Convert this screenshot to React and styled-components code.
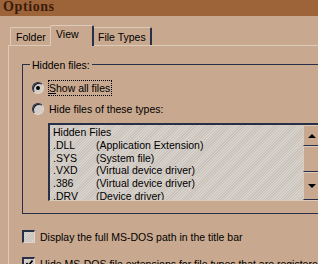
import React from "react";
import styled, { createGlobalStyle } from "styled-components";

const GlobalStyle = createGlobalStyle`
  html, body {
    margin: 0;
    padding: 0;
    width: 318px;
    height: 264px;
    overflow: hidden;
    background: #c8a88e;
  }
  body {
    font-family: "Liberation Sans", Arial, sans-serif;
    font-size: 10.5px;
    color: #000;
  }
`;

const Window = styled.div`
  width: 360px;
  height: 264px;
  display: flex;
  flex-direction: column;
`;

const TitleBar = styled.div`
  height: 16px;
  flex: none;
  background: #9c6438;
  padding-left: 3px;
  font-family: "Liberation Serif", "Times New Roman", serif;
  font-weight: bold;
  font-size: 14px;
  letter-spacing: 0.6px;
  line-height: 12px;
  color: #3c1c0c;
  padding-top: 1px;
  box-sizing: border-box;
`;

const TabStrip = styled.div`
  height: 29px;
  flex: none;
  display: flex;
  align-items: flex-end;
  padding-left: 10px;
`;

const Tab = styled.div`
  box-sizing: border-box;
  position: relative;
  z-index: ${(p) => (p.$active ? 1 : 0)};
  width: ${(p) => p.$width}px;
  height: ${(p) => (p.$active ? 21 : 18)}px;
  margin: 0 ${(p) => (p.$active ? -2 : 0)}px ${(p) => (p.$active ? -1 : 0)}px;
  padding: ${(p) => (p.$active ? 1 : 2)}px 0 0 5px;
  line-height: 14px;
  white-space: nowrap;
  background: #c8a88e;
  border-top: 1px solid #dccbb9;
  border-left: 1px solid #dccbb9;
  border-right: 2px solid #283048;
  border-radius: 2px 2px 0 0;
`;

const Panel = styled.div`
  flex: 1;
  margin-left: 8px;
  border-top: 1px solid #dccbb9;
  border-left: 1px solid #dccbb9;
  padding: 10px 0 0 13px;
`;

const Group = styled.fieldset`
  margin: 0;
  padding: 0 0 12px 0;
  width: 320px;
  min-width: 0;
  border: 1px solid #283048;
`;

const Legend = styled.legend`
  margin-left: 7px;
  padding: 3px 2px 0;
  line-height: 13px;
`;

const Options = styled.div`
  padding-left: 9px;
  display: flex;
  flex-direction: column;
  gap: 5px;
  margin-top: 8px;
`;

const RadioRow = styled.div`
  display: flex;
  align-items: center;
  gap: 4px;
`;

const Radio = styled.span`
  box-sizing: border-box;
  width: 12px;
  height: 12px;
  border-radius: 50%;
  border: 1px solid;
  border-color: #283048 #e2d6ca #e2d6ca #283048;
  background: #d4cec8;
  box-shadow: inset 1px 1px 0 #1a1a24;
  display: flex;
  align-items: center;
  justify-content: center;
  &::after {
    content: "";
    width: 4px;
    height: 4px;
    border-radius: 50%;
    background: ${(p) => (p.$checked ? "#000" : "transparent")};
  }
`;

const Label = styled.span`
  box-sizing: border-box;
  height: 16px;
  line-height: 13px;
  padding: 1px 1px 0 0;
  border: 1px dotted ${(p) => (p.$focused ? "#000" : "transparent")};
  white-space: nowrap;
`;

const ListBox = styled.div`
  box-sizing: border-box;
  margin: 6px 0 0 25px;
  width: 274px;
  height: 78px;
  display: flex;
  border-top: 2px solid #283048;
  border-left: 2px solid #283048;
  border-bottom: 1px solid #dccbb9;
  border-right: 1px solid #dccbb9;
  background: repeating-linear-gradient(
    135deg,
    #d8d2cc 0px,
    #d8d2cc 1px,
    #cac3bb 1px,
    #cac3bb 2px
  );
`;

const Items = styled.div`
  flex: 1;
  overflow: hidden;
  padding: 1px 0 0 3px;
  line-height: 12.75px;
`;

const Item = styled.div`
  display: grid;
  grid-template-columns: 43px auto;
  white-space: nowrap;
`;

const ScrollBar = styled.div`
  width: 18px;
  flex: none;
  display: flex;
  flex-direction: column;
  background: #c8a88e;
`;

const ScrollButton = styled.div`
  box-sizing: border-box;
  height: ${(p) => (p.$height ? `${p.$height}px` : "auto")};
  flex: ${(p) => (p.$height ? "none" : 1)};
  border-top: 1px solid #dccbb9;
  border-left: 1px solid #dccbb9;
  border-bottom: 1px solid #283048;
  border-right: 1px solid #283048;
  display: flex;
  align-items: center;
  justify-content: center;
`;

const Arrow = styled.span`
  width: 0;
  height: 0;
  border-left: 4px solid transparent;
  border-right: 4px solid transparent;
  ${(p) =>
    p.$down ? "border-top: 4px solid #000;" : "border-bottom: 4px solid #000;"}
`;

const CheckRow = styled.div`
  display: flex;
  align-items: center;
  gap: 5px;
  height: 14px;
  margin-top: ${(p) => p.$top}px;
`;

const CheckBox = styled.span`
  box-sizing: border-box;
  width: 13px;
  height: 13px;
  flex: none;
  border-top: 2px solid #283048;
  border-left: 2px solid #283048;
  border-bottom: 1px solid #e2d6ca;
  border-right: 1px solid #e2d6ca;
  background: repeating-linear-gradient(
    135deg,
    #d8d2cc 0px,
    #d8d2cc 1px,
    #cac3bb 1px,
    #cac3bb 2px
  );
  display: flex;
  align-items: center;
  justify-content: center;
`;

const CheckText = styled.span`
  line-height: 14px;
  padding-top: 1px;
  white-space: nowrap;
`;

const tabs = [
  { label: "Folder", width: 42 },
  { label: "View", width: 44, active: true },
  { label: "File Types", width: 60 },
];

const fileTypes = [
  [".DLL", "(Application Extension)"],
  [".SYS", "(System file)"],
  [".VXD", "(Virtual device driver)"],
  [".386", "(Virtual device driver)"],
  [".DRV", "(Device driver)"],
];

function Tick() {
  return (
    <svg width="9" height="9" viewBox="0 0 9 9">
      <polyline
        points="1.5,4 3.5,6.5 7.5,1.5"
        fill="none"
        stroke="#000"
        strokeWidth="1.8"
      />
    </svg>
  );
}

export default function App() {
  return (
    <Window>
      <GlobalStyle />
      <TitleBar>Options</TitleBar>
      <TabStrip>
        {tabs.map((t) => (
          <Tab key={t.label} $width={t.width} $active={t.active}>
            {t.label}
          </Tab>
        ))}
      </TabStrip>
      <Panel>
        <Group>
          <Legend>Hidden files:</Legend>
          <Options>
            <RadioRow>
              <Radio $checked />
              <Label $focused>
                <u>S</u>how all files
              </Label>
            </RadioRow>
            <RadioRow>
              <Radio />
              <Label>Hide files of these types:</Label>
            </RadioRow>
          </Options>
          <ListBox>
            <Items>
              <div>Hidden Files</div>
              {fileTypes.map(([ext, desc]) => (
                <Item key={ext}>
                  <span>{ext}</span>
                  <span>{desc}</span>
                </Item>
              ))}
            </Items>
            <ScrollBar>
              <ScrollButton $height={21}>
                <Arrow />
              </ScrollButton>
              <ScrollButton $height={26} />
              <ScrollButton>
                <Arrow $down />
              </ScrollButton>
            </ScrollBar>
          </ListBox>
        </Group>
        <CheckRow $top={15}>
          <CheckBox />
          <CheckText>Display the full MS-DOS path in the title bar</CheckText>
        </CheckRow>
        <CheckRow $top={13}>
          <CheckBox>
            <Tick />
          </CheckBox>
          <CheckText>
            Hide MS-DOS file extensions for file types that are registered
          </CheckText>
        </CheckRow>
      </Panel>
    </Window>
  );
}
